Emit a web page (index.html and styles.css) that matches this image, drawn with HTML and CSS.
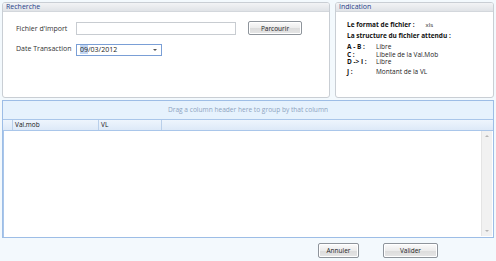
FILE: index.html
```html
<!DOCTYPE html>
<html lang="fr">

<head>
    <meta charset="UTF-8">
    <title>Import VL</title>
    <link rel="stylesheet" href="styles.css">
</head>

<body>

    <div class="top">
        <div class="panel search">
            <div class="panel-title">Recherche</div>
            <div class="search-body">
                <div class="field">
                    <label>Fichier d'import</label>
                    <input type="text" class="file-input">
                    <button class="btn browse">Parcourir</button>
                </div>
                <div class="field">
                    <label>Date Transaction</label>
                    <div class="date-input">
                        <span><span class="sel">09</span>/03/2012</span>
                        <span class="arrow"></span>
                    </div>
                </div>
            </div>
        </div>

        <div class="panel info">
            <div class="panel-title">Indication</div>
            <div class="info-body">
                <div class="line"><b>Le format de fichier :</b><span class="ext">xls</span></div>
                <div class="line"><b>La structure du fichier attendu :</b></div>
                <div class="cols">
                    <b>A - B :</b><span>Libre</span>
                    <b>C :</b><span>Libelle de la Val.Mob</span>
                    <b>D -&gt; I :</b><span>Libre</span>
                    <b>J :</b><span>Montant de la VL</span>
                </div>
            </div>
        </div>
    </div>

    <div class="grid">
        <div class="group-panel">Drag a column header here to group by that column</div>
        <div class="grid-header">
            <div class="indent"></div>
            <div class="col col-valmob">Val.mob</div>
            <div class="col col-vl">VL</div>
            <div class="col-rest"></div>
        </div>
        <div class="grid-body">
            <div class="rows"></div>
            <div class="scrollbar">
                <span class="up"></span>
                <span class="down"></span>
            </div>
        </div>
    </div>

    <div class="actions">
        <button class="btn cancel">Annuler</button>
        <button class="btn ok">Valider</button>
    </div>

</body>

</html>
```

FILE: styles.css
```css
* {
    margin: 0;
    padding: 0;
    box-sizing: border-box;
}

body {
    width: 496px;
    height: 261px;
    padding: 2px 2px 0 2px;
    background-color: #f3f9fd;
    font-family: "Open Sans", "DejaVu Sans", sans-serif;
    font-size: 7px;
    color: #222;
    display: flex;
    flex-direction: column;
    overflow: hidden;
}

.top {
    display: flex;
    gap: 5px;
    height: 96px;
}

.panel {
    border: 1px solid #c9ced4;
    border-radius: 3px;
    background-color: #fff;
    display: flex;
    flex-direction: column;
}

.search {
    width: 328px;
}

.info {
    flex: 1;
}

.panel-title {
    height: 9px;
    line-height: 8px;
    padding-left: 3px;
    color: #1d3f8a;
    font-size: 7px;
    background: linear-gradient(#f2f3f5, #e0e3e7);
    border-bottom: 1px solid #d3d7dc;
    border-radius: 2px 2px 0 0;
}

.search-body {
    padding: 10px 0 0 13px;
    display: flex;
    flex-direction: column;
    gap: 7px;
}

.field {
    display: flex;
    align-items: center;
    height: 13px;
}

.field label {
    width: 60px;
    color: #333;
}

.file-input {
    width: 160px;
    height: 13px;
    border: 1px solid #c8ccd1;
    background: #fff;
}

.btn {
    font-family: "Open Sans", "DejaVu Sans", sans-serif;
    font-size: 6.5px;
    color: #222;
    border: 1px solid #8e949b;
    border-radius: 2px;
    background: linear-gradient(#fbfbfb 0%, #ececec 50%, #dcdcdc 51%, #e6e6e6 100%);
    box-shadow: inset 0 0 0 1px #fff;
}

.browse {
    width: 54px;
    height: 14px;
    margin-left: 12px;
    margin-top: -1px;
}

.date-input {
    width: 86px;
    height: 12px;
    margin-top: 2px;
    border: 1px solid #7a9fd6;
    background: #fff;
    display: flex;
    align-items: center;
    justify-content: space-between;
    padding: 0 4px 0 3px;
    font-size: 7px;
    color: #222;
}

.date-input .sel {
    background-color: #c3d7f3;
}

.date-input .arrow {
    width: 0;
    height: 0;
    border-left: 2px solid transparent;
    border-right: 2px solid transparent;
    border-top: 2px solid #555;
}

.info-body {
    padding: 8px 0 0 11px;
    font-size: 6.5px;
}

.info-body b {
    font-weight: bold;
    color: #111;
}

.line {
    height: 11px;
}

.ext {
    margin-left: 11px;
    font-size: 6px;
}

.cols {
    display: grid;
    grid-template-columns: 29px auto;
    line-height: 7.6px;
    padding-top: 1px;
}

.cols b:nth-of-type(4),
.cols span:nth-of-type(4) {
    margin-top: 2px;
}

.grid {
    margin-top: 2px;
    height: 138px;
    border: 1px solid #9dbde6;
    background: #fff;
    display: flex;
    flex-direction: column;
}

.group-panel {
    height: 19px;
    line-height: 18px;
    text-align: center;
    font-size: 6.6px;
    color: #8ea4bf;
    background-color: #e6f2fd;
    border-bottom: 1px solid #a9c6ea;
}

.grid-header {
    height: 11px;
    display: flex;
    background: linear-gradient(#eef5fd, #dde9f8);
    border-bottom: 1px solid #a9c6ea;
    font-size: 6.5px;
    line-height: 10px;
    color: #111;
}

.indent {
    width: 10px;
    border-right: 1px solid #b9cfea;
}

.col {
    border-right: 1px solid #b9cfea;
    padding-left: 2px;
}

.col-valmob {
    width: 86px;
}

.col-vl {
    width: 63px;
}

.col-rest {
    flex: 1;
}

.grid-body {
    flex: 1;
    display: flex;
    border-left: 1px solid #a9c6ea;
}

.rows {
    flex: 1;
}

.scrollbar {
    width: 11px;
    margin: 0 1px 1px 0;
    background-color: #f1f1f1;
    border-left: 1px solid #e4e4e4;
    display: flex;
    flex-direction: column;
    justify-content: space-between;
    align-items: center;
    padding: 4px 0;
}

.scrollbar .up {
    width: 0;
    height: 0;
    border-left: 2px solid transparent;
    border-right: 2px solid transparent;
    border-bottom: 2px solid #b5b5b5;
}

.scrollbar .down {
    width: 0;
    height: 0;
    border-left: 2px solid transparent;
    border-right: 2px solid transparent;
    border-top: 2px solid #b5b5b5;
}

.actions {
    display: flex;
    padding: 5px 0 0 316px;
    gap: 24px;
}

.cancel {
    width: 41px;
    height: 15px;
}

.ok {
    width: 55px;
    height: 15px;
}
```
